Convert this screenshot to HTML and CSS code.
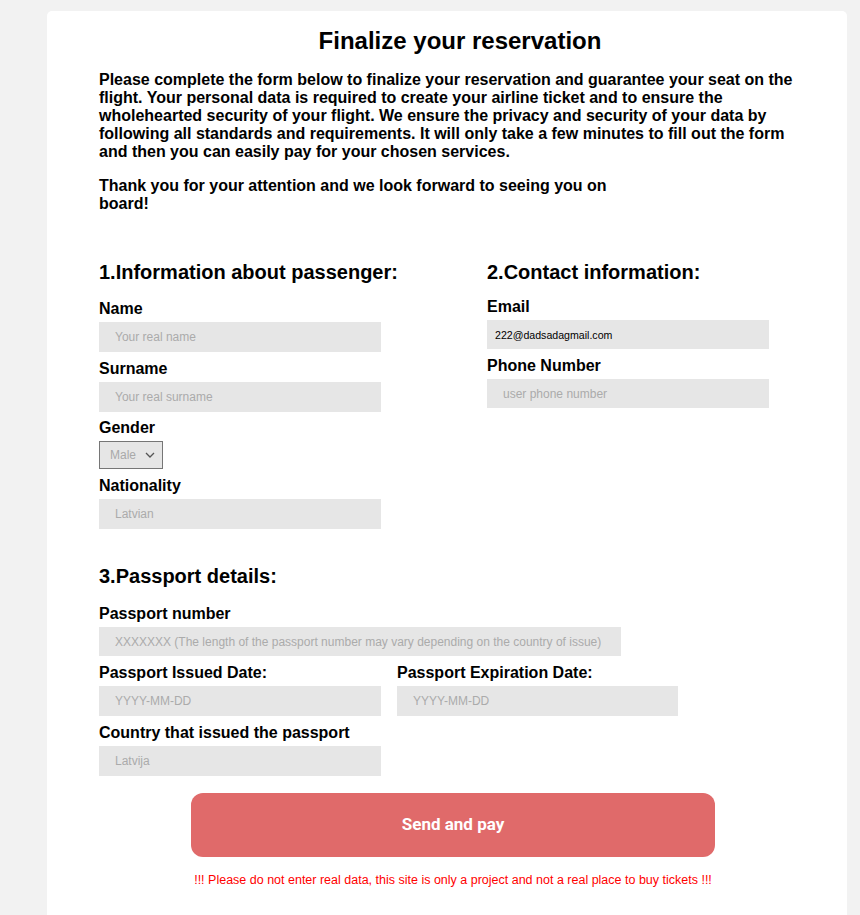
FILE: index.html
```html
<!DOCTYPE html>
<html lang="en">
<head>
<meta charset="utf-8">
<title>Finalize your reservation</title>
<link rel="stylesheet" href="styles.css">
</head>
<body>
<main class="card">
  <h1 class="title">Finalize your reservation</h1>
  <p class="intro intro-main">Please complete the form below to finalize your reservation and guarantee your seat on the flight. Your personal data is required to create your airline ticket and to ensure the wholehearted security of your flight. We ensure the privacy and security of your data by following all standards and requirements. It will only take a few minutes to fill out the form and then you can easily pay for your chosen services.</p>
  <p class="intro intro-thanks">Thank you for your attention and we look forward to seeing you on board!</p>

  <form class="form">
    <div class="columns">
      <section class="group group-left">
        <h2 class="section-title">1.Information about passenger:</h2>
        <label class="label" for="name">Name</label>
        <input class="field" id="name" type="text" placeholder="Your real name">
        <label class="label" for="surname">Surname</label>
        <input class="field" id="surname" type="text" placeholder="Your real surname">
        <label class="label label-gender" for="gender">Gender</label>
        <div class="select-wrap">
          <select class="select" id="gender">
            <option>Male</option>
            <option>Female</option>
          </select>
          <svg class="chevron" width="10" height="6" viewBox="0 0 10 6" aria-hidden="true"><path d="M1 1l4 4 4-4" fill="none" stroke="#555" stroke-width="1.3"/></svg>
        </div>
        <label class="label" for="nationality">Nationality</label>
        <input class="field" id="nationality" type="text" placeholder="Latvian">
      </section>

      <section class="group group-right">
        <h2 class="section-title section-title-right">2.Contact information:</h2>
        <label class="label" for="email">Email</label>
        <input class="field field-short field-email" id="email" type="email" value="222@dadsadagmail.com">
        <label class="label" for="phone">Phone Number</label>
        <input class="field field-short" id="phone" type="tel" placeholder="user phone number">
      </section>
    </div>

    <section class="group passport">
      <h2 class="section-title section-title-passport">3.Passport details:</h2>
      <label class="label" for="pnum">Passport number</label>
      <input class="field field-wide" id="pnum" type="text" placeholder="XXXXXXX (The length of the passport number may vary depending on the country of issue)">
      <div class="dates">
        <div class="group">
          <label class="label" for="issued">Passport Issued Date:</label>
          <input class="field" id="issued" type="text" placeholder="YYYY-MM-DD">
        </div>
        <div class="group">
          <label class="label" for="expires">Passport Expiration Date:</label>
          <input class="field field-exp" id="expires" type="text" placeholder="YYYY-MM-DD">
        </div>
      </div>
      <label class="label" for="country">Country that issued the passport</label>
      <input class="field" id="country" type="text" placeholder="Latvija">
    </section>

    <div class="footer">
      <button class="submit" type="button">Send and pay</button>
      <p class="warning">!!! Please do not enter real data, this site is only a project and not a real place to buy tickets !!!</p>
    </div>
  </form>
</main>
</body>
</html>
```

FILE: styles.css
```css
html, body {
  margin: 0;
  padding: 0;
}

body {
  background: #f2f2f2;
  font-family: "Liberation Sans", Arial, sans-serif;
  color: #000;
}

.card {
  box-sizing: border-box;
  width: 800px;
  min-height: 920px;
  margin: 11px 0 0 47px;
  padding: 16px 26px 30px 52px;
  background: #fff;
  border-radius: 5px 5px 0 0;
}

.title {
  margin: 0;
  font-size: 24px;
  line-height: 28px;
  font-weight: bold;
  text-align: center;
}

.intro {
  margin: 16px 0 0;
  font-size: 16px;
  line-height: 18px;
  font-weight: bold;
}

.intro-main {
  max-width: 706px;
}

.intro-thanks {
  max-width: 530px;
}

.form {
  margin-top: 48px;
}

.columns {
  display: grid;
  grid-template-columns: 388px 1fr;
}

.group {
  display: flex;
  flex-direction: column;
  align-items: flex-start;
}

.section-title {
  margin: 0 0 15px;
  font-size: 20px;
  line-height: 23px;
  font-weight: bold;
}

.section-title-right {
  margin-bottom: 13px;
}

.section-title-passport {
  margin-bottom: 16px;
}

.label {
  display: block;
  height: 18px;
  margin-bottom: 4px;
  padding-top: 1px;
  font-size: 16px;
  line-height: 18px;
  font-weight: bold;
}

.label-gender {
  margin-top: -1px;
}

.field {
  box-sizing: border-box;
  display: block;
  width: 282px;
  height: 30px;
  margin: 0 0 7px;
  padding: 0 16px;
  border: none;
  outline: none;
  background: #e6e6e6;
  font-family: "Liberation Sans", Arial, sans-serif;
  font-size: 12px;
  color: #000;
}

.field::placeholder {
  color: #ababab;
  opacity: 1;
}

.field-short {
  height: 29px;
}

.field-email {
  padding-left: 8px;
  font-size: 10.6px;
}

.field-wide {
  width: 522px;
  height: 29px;
}

.field-exp {
  width: 281px;
}

.select-wrap {
  position: relative;
  margin-bottom: 7px;
}

.select {
  box-sizing: border-box;
  display: block;
  width: 64px;
  height: 28px;
  margin: 0;
  padding: 0 0 0 10px;
  border: 1px solid #767676;
  border-radius: 0;
  background: #e6e6e6;
  color: #a9a9a9;
  font-family: "Liberation Sans", Arial, sans-serif;
  font-size: 12px;
  appearance: none;
  -webkit-appearance: none;
}

.chevron {
  position: absolute;
  right: 8px;
  top: 11px;
  pointer-events: none;
}

.passport {
  margin-top: 29px;
}

.dates {
  display: grid;
  grid-template-columns: 298px 1fr;
  width: 100%;
}

.footer {
  width: 524px;
  margin: 10px 0 0 92px;
  text-align: center;
}

.submit {
  display: block;
  width: 524px;
  height: 64px;
  margin: 0;
  padding: 0 0 2px;
  border: none;
  border-radius: 12px;
  background: #e06a6a;
  color: #fff;
  font-family: Roboto, "Liberation Sans", Arial, sans-serif;
  font-size: 17px;
  font-weight: bold;
  cursor: pointer;
}

.warning {
  margin: 16px 0 0;
  font-size: 12.5px;
  line-height: 14px;
  color: #ff0000;
}
```
